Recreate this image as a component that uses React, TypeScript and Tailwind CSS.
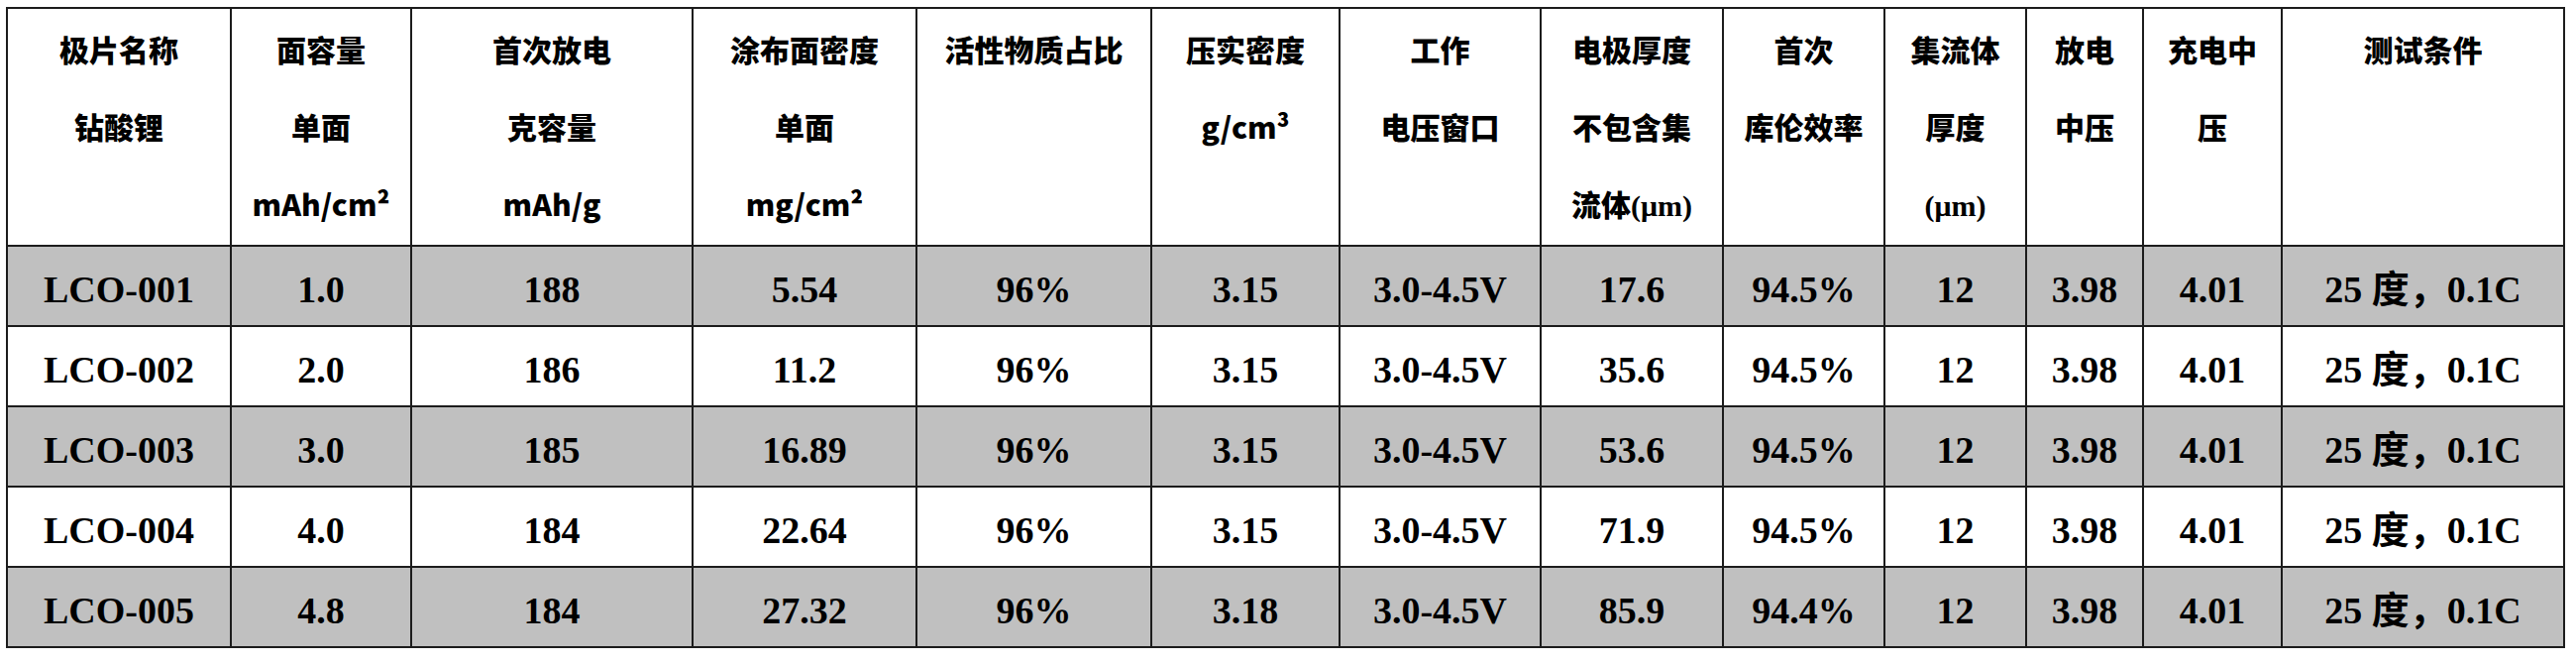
const sans = "font-['Noto_Sans_CJK_SC','Noto_Sans',sans-serif]";
const serif = "font-['Liberation_Serif','Noto_Sans_CJK_SC',serif]";

const columns: { w: string; head: string[] }[] = [
  { w: "w-[226px]", head: ["极片名称", "钻酸锂"] },
  { w: "w-[182px]", head: ["面容量", "单面", "mAh/cm²"] },
  { w: "w-[284px]", head: ["首次放电", "克容量", "mAh/g"] },
  { w: "w-[226px]", head: ["涂布面密度", "单面", "mg/cm²"] },
  { w: "w-[237px]", head: ["活性物质占比"] },
  { w: "w-[190px]", head: ["压实密度", "g/cm³"] },
  { w: "w-[203px]", head: ["工作", "电压窗口"] },
  { w: "w-[184px]", head: ["电极厚度", "不包含集", "流体(μm)"] },
  { w: "w-[163px]", head: ["首次", "库伦效率"] },
  { w: "w-[143px]", head: ["集流体", "厚度", "(μm)"] },
  { w: "w-[118px]", head: ["放电", "中压"] },
  { w: "w-[140px]", head: ["充电中", "压"] },
  { w: "w-[285px]", head: ["测试条件"] },
];

const rows = [
  ["LCO-001", "1.0", "188", "5.54", "96%", "3.15", "3.0-4.5V", "17.6", "94.5%", "12", "3.98", "4.01", "25 度，0.1C"],
  ["LCO-002", "2.0", "186", "11.2", "96%", "3.15", "3.0-4.5V", "35.6", "94.5%", "12", "3.98", "4.01", "25 度，0.1C"],
  ["LCO-003", "3.0", "185", "16.89", "96%", "3.15", "3.0-4.5V", "53.6", "94.5%", "12", "3.98", "4.01", "25 度，0.1C"],
  ["LCO-004", "4.0", "184", "22.64", "96%", "3.15", "3.0-4.5V", "71.9", "94.5%", "12", "3.98", "4.01", "25 度，0.1C"],
  ["LCO-005", "4.8", "184", "27.32", "96%", "3.18", "3.0-4.5V", "85.9", "94.4%", "12", "3.98", "4.01", "25 度，0.1C"],
];

// "(μm)" is set in the serif face in the original
function HeadLine({ text }: { text: string }) {
  const i = text.indexOf("(μm)");
  if (i < 0) return <div>{text}</div>;
  return (
    <div>
      {text.slice(0, i)}
      <span className={serif}>(μm)</span>
    </div>
  );
}

export default function App() {
  return (
    <div className="w-[2600px] h-[668px] bg-white pl-[6px] pt-[7px]">
      <table className="table-fixed border-collapse w-[2583px] text-black">
        <thead>
          <tr className="h-[235px]">
            {columns.map((c, i) => (
              <th
                key={i}
                className={`${c.w} ${sans} border-2 border-[#1c1c1c] align-top pt-[1px] pb-0 px-0 text-[30px] leading-[78px] font-black`}
              >
                {c.head.map((h, j) => (
                  <HeadLine key={j} text={h} />
                ))}
              </th>
            ))}
          </tr>
        </thead>
        <tbody>
          {rows.map((r, i) => (
            <tr key={i} className={`h-[81px] ${i % 2 === 0 ? "bg-[#c0c0c0]" : "bg-white"}`}>
              {r.map((v, j) => (
                <td
                  key={j}
                  className={`${serif} border-2 border-[#1c1c1c] align-middle text-center pt-[7px] pb-0 px-0 text-[38px] leading-[44px] font-bold`}
                >
                  {v}
                </td>
              ))}
            </tr>
          ))}
        </tbody>
      </table>
    </div>
  );
}
